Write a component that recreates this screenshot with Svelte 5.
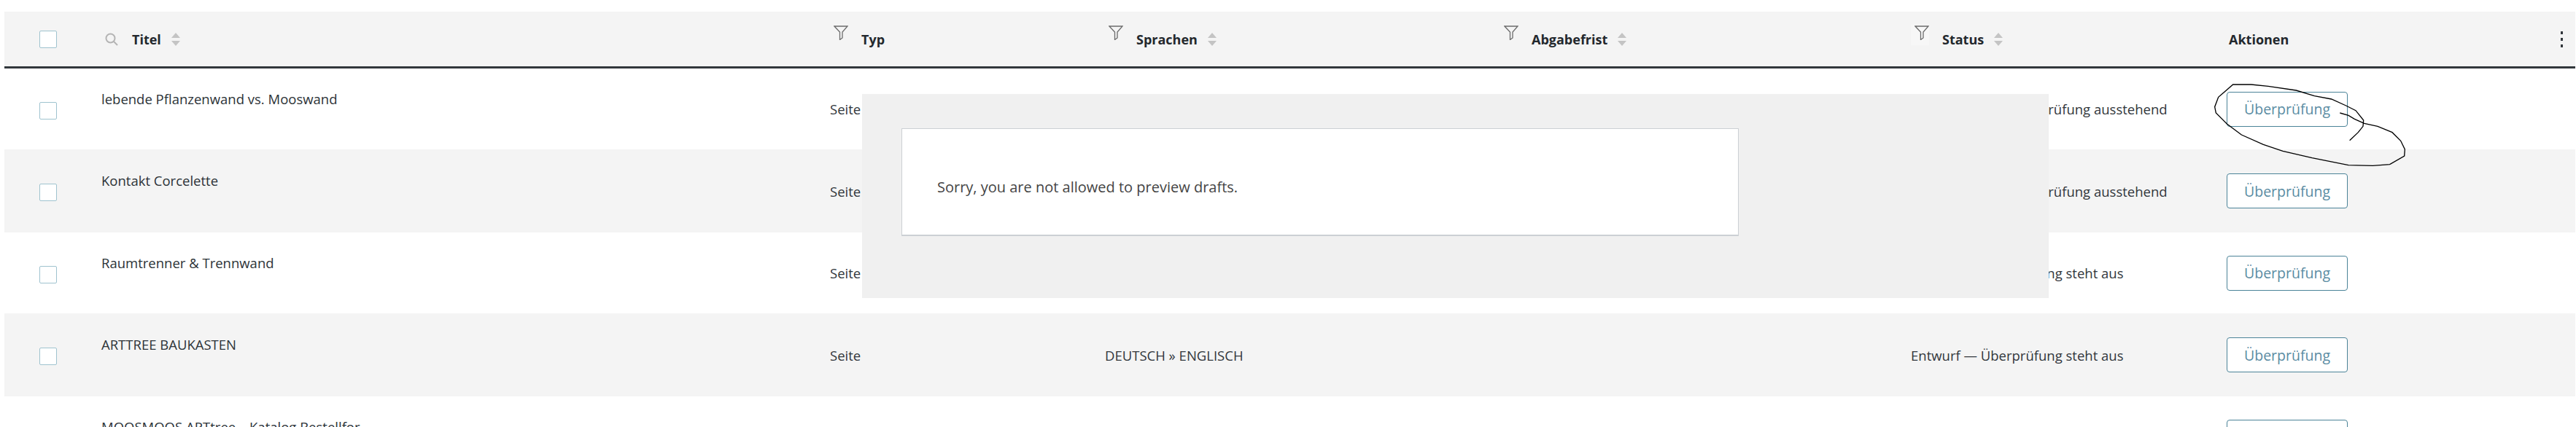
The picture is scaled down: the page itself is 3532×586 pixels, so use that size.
<script>
  const rows = [
    { title: 'lebende Pflanzenwand vs. Mooswand', status: 'Freigegeben — Überprüfung ausstehend', h: 'tall' },
    { title: 'Kontakt Corcelette', status: 'Freigegeben — Überprüfung ausstehend', h: 'wide' },
    { title: 'Raumtrenner & Trennwand', status: 'Entwurf — Überprüfung steht aus', h: 'tall' },
    { title: 'ARTTREE BAUKASTEN', status: 'Entwurf — Überprüfung steht aus', h: 'wide' },
    { title: 'MOOSMOOS ARTtree – Katalog Bestellfor', status: 'Entwurf — Überprüfung steht aus', h: 'tall' }
  ];
  const cols = [
    { label: 'Typ', sort: false, lit: false },
    { label: 'Sprachen', sort: true, lit: false },
    { label: 'Abgabefrist', sort: true, lit: false },
    { label: 'Status', sort: true, lit: true }
  ];
  const scribble = 'M605 308 L640 275 L660 250 L662 225 L630 185 L590 165 L530 138 L460 125 L385 102 L270 85 L200 78 L125 78 L100 100 L65 130 L50 170 L55 195 L100 240 L160 285 L250 325 L330 352 L450 380 L600 410 L700 412 L770 407 L830 372 L832 345 L815 310 L780 275 L720 250 L665 238 L625 220 L600 205 L565 195';
</script>

{#snippet sortIcon()}
  <svg class="sort" viewBox="0 0 12 18" aria-hidden="true">
    <path d="M6 0 L12 7 H0 Z M0 11 H12 L6 18 Z" />
  </svg>
{/snippet}

<div class="page">
  <div class="table">
    <div class="row head">
      <div class="c check"><span class="box"></span></div>
      <div class="c title">
        <svg class="search" viewBox="0 0 18 18" aria-hidden="true">
          <circle cx="7.5" cy="7.5" r="6" />
          <path d="M12 12 L17 17" />
        </svg>
        <span class="th">Titel</span>
        {@render sortIcon()}
      </div>
      {#each cols as col}
        <div class="c">
          <span class="fwrap" class:lit={col.lit}>
            <svg class="funnel" viewBox="0 0 20 20" aria-hidden="true">
              <path d="M1 1 H19 L12 9 V17 L8.5 19.5 V9 Z" />
            </svg>
          </span>
          <span class="th">{col.label}</span>
          {#if col.sort}{@render sortIcon()}{/if}
        </div>
      {/each}
      <div class="c"><span class="th act">Aktionen</span></div>
      <div class="c kebab"><span></span><span></span><span></span></div>
    </div>

    {#each rows as row, i}
      <div class="row body {row.h}" class:alt={i % 2 === 1}>
        <div class="c check"><span class="box"></span></div>
        <div class="c name">{row.title}</div>
        <div class="c">Seite</div>
        <div class="c">DEUTSCH » ENGLISCH</div>
        <div class="c"></div>
        <div class="c">{row.status}</div>
        <div class="c"><button type="button">Überprüfung</button></div>
        <div class="c"></div>
      </div>
    {/each}
  </div>

  <div class="overlay">
    <div class="notice">Sorry, you are not allowed to preview drafts.</div>
  </div>

  <svg class="scribble" viewBox="0 0 900 450" aria-hidden="true">
    <path d={scribble} />
  </svg>
</div>

<style>
  :global(body) {
    margin: 0;
    background: #fff;
  }
  .page {
    position: relative;
    height: 586px;
    overflow: hidden;
    padding: 16px 1px 0 6px;
    box-sizing: border-box;
    font-family: "Open Sans", "Noto Sans", sans-serif;
    font-size: 18.5px;
    color: #32373c;
  }
  .row {
    display: grid;
    grid-template-columns: 133px 999px 377px 542px 563px 433px 1fr 38px;
    align-items: center;
  }
  .head {
    height: 75px;
    background: #f4f4f4;
    border-bottom: 3px solid #32373c;
  }
  .body.tall { height: 111px; }
  .body.wide { height: 114px; }
  .alt {
    background: #f4f4f4;
  }
  .c {
    display: flex;
    align-items: center;
  }
  .check {
    padding-left: 48px;
  }
  .body .check {
    margin-top: 4px;
  }
  .box {
    width: 24px;
    height: 24px;
    box-sizing: border-box;
    background: #fff;
    border: 1px solid #9fc3cf;
    border-radius: 2px;
  }
  .name {
    align-self: start;
    margin-top: 29px;
    line-height: 26px;
    color: #2c3338;
  }
  .wide .name {
    margin-top: 30px;
  }
  .th {
    font-weight: 700;
    color: #23282d;
    font-size: 18px;
  }
  .act {
    margin-left: 3px;
  }
  .search {
    width: 18px;
    height: 18px;
    margin: 0 19px 0 5px;
    fill: none;
    stroke: #b4b4b4;
    stroke-width: 2;
  }
  .sort {
    width: 12px;
    height: 18px;
    margin-left: 14px;
    fill: #c4c4c4;
  }
  .fwrap {
    display: flex;
    margin-right: 18px;
    padding: 1px 0 7px 5px;
    margin-top: -12px;
  }
  .fwrap.lit {
    background: #f7f7f7;
  }
  .funnel {
    width: 20px;
    height: 20px;
    fill: none;
    stroke: #6b6b6b;
    stroke-width: 1.3;
  }
  .kebab {
    flex-direction: column;
    gap: 5px;
  }
  .kebab span {
    width: 3px;
    height: 4px;
    background: #32373c;
  }
  button {
    width: 166px;
    height: 48px;
    padding: 0;
    background: #fff;
    border: 1.5px solid #4b8398;
    border-radius: 4px;
    color: #5a8ca3;
    font: inherit;
    font-size: 19.5px;
  }
  .overlay {
    position: absolute;
    left: 1182px;
    top: 129px;
    width: 1627px;
    height: 280px;
    background: #f0f0f0;
    box-sizing: border-box;
    padding: 47px 0 0 54px;
  }
  .notice {
    width: 1148px;
    height: 148px;
    box-sizing: border-box;
    display: flex;
    align-items: center;
    padding: 14px 0 0 48px;
    background: #fff;
    border: 1px solid #ccd0d4;
    border-bottom-width: 2px;
    color: #444;
    font-size: 20px;
  }
  .scribble {
    position: absolute;
    left: 3020px;
    top: 90px;
    width: 300px;
    height: 150px;
    fill: none;
    stroke: #000;
    stroke-width: 4;
  }
</style>
